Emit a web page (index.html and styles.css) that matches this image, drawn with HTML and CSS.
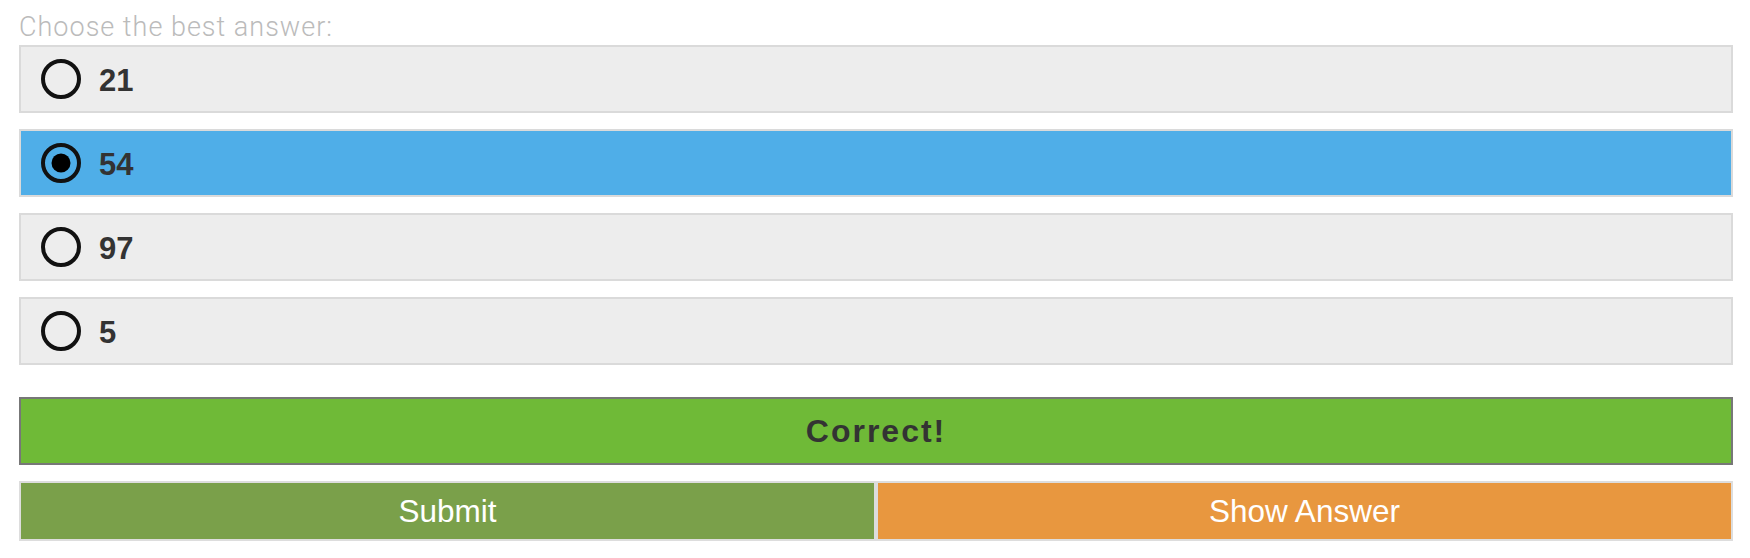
FILE: index.html
```html
<!DOCTYPE html>
<html lang="en">
<head>
<meta charset="utf-8">
<title>Quiz</title>
<link rel="stylesheet" href="styles.css">
</head>
<body>
<div class="quiz">
  <div class="prompt">Choose the best answer:</div>
  <div class="options">
    <div class="option">
      <svg class="radio" viewBox="0 0 40 40" width="40" height="40"><circle cx="20" cy="20" r="18" fill="none" stroke="#111" stroke-width="4"/></svg>
      <span class="label">21</span>
    </div>
    <div class="option selected">
      <svg class="radio" viewBox="0 0 40 40" width="40" height="40"><circle cx="20" cy="20" r="18" fill="none" stroke="#111" stroke-width="4"/><circle cx="20" cy="20" r="9.5" fill="#000"/></svg>
      <span class="label">54</span>
    </div>
    <div class="option">
      <svg class="radio" viewBox="0 0 40 40" width="40" height="40"><circle cx="20" cy="20" r="18" fill="none" stroke="#111" stroke-width="4"/></svg>
      <span class="label">97</span>
    </div>
    <div class="option">
      <svg class="radio" viewBox="0 0 40 40" width="40" height="40"><circle cx="20" cy="20" r="18" fill="none" stroke="#111" stroke-width="4"/></svg>
      <span class="label">5</span>
    </div>
  </div>
  <div class="feedback">Correct!</div>
  <div class="actions">
    <div class="btn submit">Submit</div>
    <div class="btn show">Show Answer</div>
  </div>
</div>
</body>
</html>
```
FILE: styles.css
```css
html, body {
  margin: 0;
  padding: 0;
  background: #fff;
}

.quiz {
  padding: 0 17px 0 19px;
  font-family: "Liberation Sans", Arial, sans-serif;
}

.prompt {
  font-family: Roboto, "Liberation Sans", sans-serif;
  font-weight: 300;
  font-size: 27px;
  line-height: 36px;
  padding-top: 9px;
  color: #bbbbbb;
  letter-spacing: 1px;
}

.options {
  display: flex;
  flex-direction: column;
  gap: 16px;
}

.option {
  box-sizing: border-box;
  height: 68px;
  border: 2px solid #dadada;
  background: #ededed;
  display: flex;
  align-items: center;
  padding-left: 20px;
}

.option.selected {
  background: #4faee8;
}

.radio {
  display: block;
  flex: none;
}

.label {
  margin-left: 18px;
  padding-top: 2px;
  font-weight: bold;
  font-size: 31px;
  line-height: 31px;
  color: #333333;
}

.feedback {
  box-sizing: border-box;
  margin-top: 32px;
  height: 68px;
  border: 2px solid #777777;
  background: #6fba37;
  color: #333333;
  font-weight: bold;
  font-size: 32px;
  letter-spacing: 2px;
  display: flex;
  align-items: center;
  justify-content: center;
}

.actions {
  margin-top: 16px;
  display: grid;
  grid-template-columns: 1fr 1fr;
}

.btn {
  box-sizing: border-box;
  height: 60px;
  border: 2px solid #dddddd;
  color: #ffffff;
  font-size: 31.5px;
  display: flex;
  align-items: center;
  justify-content: center;
}

.btn.submit {
  background: #7aa04a;
}

.btn.show {
  background: #e8973f;
}
```
